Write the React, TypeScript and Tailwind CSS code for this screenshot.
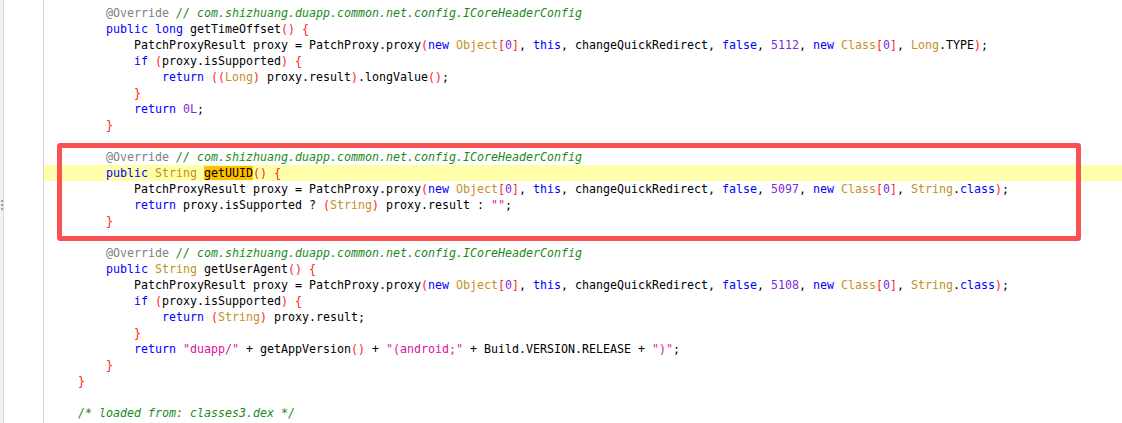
import React from "react";

type Seg = [string, string?];

const kw = "text-[#0000ff]";
const ty = "text-[#c5901c]";
const num = "text-[#7f2bd8]";
const br = "text-[#ff1a1a]";
const str = "text-[#d8149c]";
const ann = "text-[#808080]";
const com = "text-[#1a8a1a] italic";

const headerComment: Seg[] = [
  ["@Override", ann],
  [" "],
  ["// com.shizhuang.duapp.common.net.config.ICoreHeaderConfig", com],
];

const proxyLine = (id: string, last: Seg[]): Seg[] => [
  ["PatchProxyResult proxy = PatchProxy.proxy"],
  ["(", br],
  ["new", kw],
  [" "],
  ["Object", ty],
  ["[", br],
  ["0", num],
  ["]", br],
  [", "],
  ["this", kw],
  [", changeQuickRedirect, "],
  ["false", kw],
  [", "],
  [id, num],
  [", "],
  ["new", kw],
  [" "],
  ["Class", ty],
  ["[", br],
  ["0", num],
  ["]", br],
  [", "],
  ...last,
  [")", br],
  [";"],
];

const stringClass: Seg[] = [["String", ty], ["."], ["class", kw]];

const lines: { lvl: number; segs: Seg[]; hl?: boolean }[] = [
  { lvl: 2, segs: headerComment },
  {
    lvl: 2,
    segs: [["public", kw], [" "], ["long", kw], [" getTimeOffset"], ["()", br], [" "], ["{", br]],
  },
  { lvl: 3, segs: proxyLine("5112", [["Long", ty], [".TYPE"]]) },
  {
    lvl: 3,
    segs: [["if", kw], [" "], ["(", br], ["proxy.isSupported"], [")", br], [" "], ["{", br]],
  },
  {
    lvl: 4,
    segs: [
      ["return", kw],
      [" "],
      ["((", br],
      ["Long", ty],
      [")", br],
      [" proxy.result"],
      [")", br],
      [".longValue"],
      ["()", br],
      [";"],
    ],
  },
  { lvl: 3, segs: [["}", br]] },
  { lvl: 3, segs: [["return", kw], [" "], ["0L", num], [";"]] },
  { lvl: 2, segs: [["}", br]] },
  { lvl: 0, segs: [] },
  { lvl: 2, segs: headerComment },
  {
    lvl: 2,
    hl: true,
    segs: [
      ["public", kw],
      [" "],
      ["String", ty],
      [" "],
      ["getUUID", "bg-[#ffc000]"],
      ["()", br],
      [" "],
      ["{", br],
    ],
  },
  { lvl: 3, segs: proxyLine("5097", stringClass) },
  {
    lvl: 3,
    segs: [
      ["return", kw],
      [" proxy.isSupported ? "],
      ["(", br],
      ["String", ty],
      [")", br],
      [" proxy.result : "],
      ['""', str],
      [";"],
    ],
  },
  { lvl: 2, segs: [["}", br]] },
  { lvl: 0, segs: [] },
  { lvl: 2, segs: headerComment },
  {
    lvl: 2,
    segs: [["public", kw], [" "], ["String", ty], [" getUserAgent"], ["()", br], [" "], ["{", br]],
  },
  { lvl: 3, segs: proxyLine("5108", stringClass) },
  {
    lvl: 3,
    segs: [["if", kw], [" "], ["(", br], ["proxy.isSupported"], [")", br], [" "], ["{", br]],
  },
  {
    lvl: 4,
    segs: [["return", kw], [" "], ["(", br], ["String", ty], [")", br], [" proxy.result;"]],
  },
  { lvl: 3, segs: [["}", br]] },
  {
    lvl: 3,
    segs: [
      ["return", kw],
      [" "],
      ['"duapp/"', str],
      [" + getAppVersion"],
      ["()", br],
      [" + "],
      ['"(android;"', str],
      [" + Build.VERSION.RELEASE + "],
      ['")"', str],
      [";"],
    ],
  },
  { lvl: 2, segs: [["}", br]] },
  { lvl: 1, segs: [["}", br]] },
  { lvl: 0, segs: [] },
  { lvl: 1, segs: [["/* loaded from: classes3.dex */", com]] },
];

const App = () => {
  return (
    <div className="relative flex w-[1122px] h-[423px] overflow-hidden bg-white">
      {/* splitter strip */}
      <div className="flex flex-col w-[4px] h-full bg-[#f0f0f0] border-r border-[#d6d6d6]">
        <div className="flex flex-col gap-[2px] mt-[200px] pl-px">
          <span className="block w-[2px] h-[2px] bg-[#a0a0a0]" />
          <span className="block w-[2px] h-[2px] bg-[#a0a0a0]" />
          <span className="block w-[2px] h-[2px] bg-[#a0a0a0]" />
        </div>
      </div>
      {/* gutter */}
      <div className="w-[40px] h-full border-r border-[#d4d4d4]" />
      {/* code */}
      <div
        className="flex-1 pt-[5px] text-[11.63px] leading-[16px] text-black"
        style={{ fontFamily: '"DejaVu Sans Mono", "Liberation Mono", monospace' }}
      >
        {lines.map((line, i) => (
          <div
            key={i}
            className={
              line.hl
                ? "h-[16px] pl-[6px] whitespace-pre bg-[#ffffaa]"
                : "h-[16px] pl-[6px] whitespace-pre"
            }
          >
            {"    ".repeat(line.lvl)}
            {line.segs.map((s, j) => (
              <span key={j} className={s[1] ?? ""}>
                {s[0]}
              </span>
            ))}
          </div>
        ))}
      </div>
      {/* annotation box */}
      <div className="absolute left-[57px] top-[143px] w-[1024px] h-[98px] border-[5px] border-[#fa5252] rounded-[3px]" />
    </div>
  );
};

export default App;
